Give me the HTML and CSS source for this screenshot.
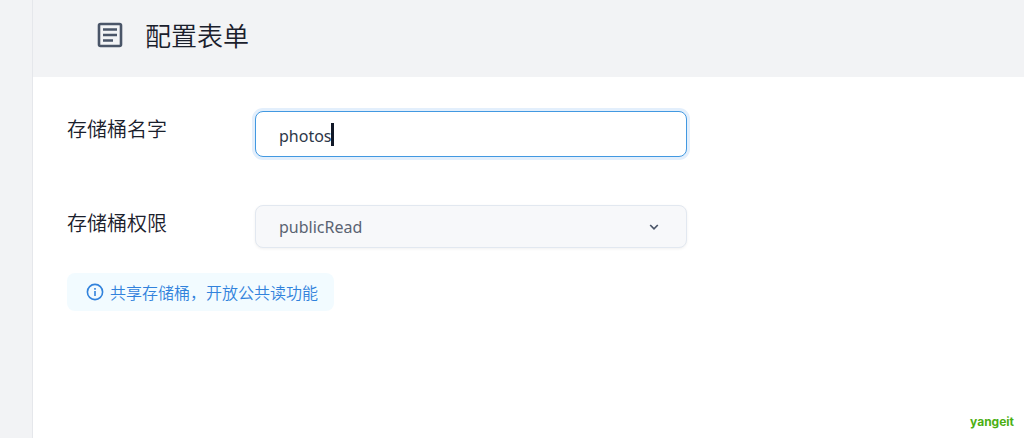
FILE: index.html
```html
<!DOCTYPE html>
<html lang="zh-CN">
<head>
<meta charset="utf-8">
<meta name="viewport" content="width=device-width, initial-scale=1">
<title>配置表单</title>
<link rel="stylesheet" href="styles.css">
</head>
<body>
<div class="layout">
  <aside class="rail"></aside>
  <main class="panel">
    <header class="panel-header">
      <svg class="header-icon" viewBox="0 0 26 26" fill="none" stroke="currentColor" aria-hidden="true">
        <rect x="2" y="2" width="22" height="22" rx="1.5" stroke-width="2.6"/>
        <path d="M6 7.5h14M6 13h14M6 18.5h10" stroke-width="2.4"/>
      </svg>
      <h1 class="title">配置表单</h1>
    </header>
    <form class="form">
      <div class="row">
        <label class="label" for="name">存储桶名字</label>
        <div class="field">
          <input class="control input" id="name" type="text" value="photos">
          <span class="caret"></span>
        </div>
      </div>
      <div class="row">
        <label class="label" for="access">存储桶权限</label>
        <div class="field">
          <select class="control select" id="access">
            <option>publicRead</option>
          </select>
          <svg class="chevron" viewBox="0 0 10 8" fill="none" stroke="currentColor" aria-hidden="true">
            <path d="M1.2 2 5 5.8 8.8 2" stroke-width="1.7"/>
          </svg>
        </div>
      </div>
      <p class="hint">
        <svg class="hint-icon" viewBox="0 0 18 18" fill="none" stroke="currentColor" aria-hidden="true">
          <circle cx="9" cy="9" r="7.6" stroke-width="1.6"/>
          <path d="M9 8v5M9 5v1.7" stroke-width="1.6"/>
        </svg>
        <span>共享存储桶，开放公共读功能</span>
      </p>
    </form>
    <footer class="brand">yangeit</footer>
  </main>
</div>
</body>
</html>
```
FILE: styles.css
```css
* {
  box-sizing: border-box;
}

body {
  margin: 0;
  background: #fff;
  color: #1a202c;
  font-family: "Noto Sans", "Noto Sans CJK SC", sans-serif;
  font-size: 16px;
}

.layout {
  display: flex;
  min-height: 100vh;
}

.rail {
  flex: 0 0 33px;
  background: #f2f3f5;
  border-right: 1px solid #e5e7eb;
}

.panel {
  flex: 1;
  display: flex;
  flex-direction: column;
}

.panel-header {
  display: flex;
  align-items: center;
  gap: 22px;
  padding: 15px 64px 22px;
  background: #f2f3f5;
}

.header-icon {
  width: 26px;
  height: 26px;
  color: #4a5568;
}

.title {
  margin: 0;
  font-family: "Noto Sans CJK SC", sans-serif;
  font-size: 26px;
  line-height: 40px;
  font-weight: 350;
}

.form {
  flex: 1;
  padding: 34px;
}

.row {
  display: flex;
  align-items: flex-start;
  margin-bottom: 48px;
}

.row + .row {
  margin-bottom: 25px;
}

.label {
  flex: 0 0 188px;
  font-family: "Noto Sans CJK SC", sans-serif;
  font-size: 20px;
  font-weight: 350;
  line-height: 35px;
}

.field {
  position: relative;
  flex: 0 1 432px;
}

.control {
  display: block;
  width: 100%;
  padding: 0 23px;
  border: 1px solid #e2e8f0;
  border-radius: 8px;
  font: inherit;
  outline: none;
}

.input {
  height: 46px;
  padding-top: 3px;
  border-color: #4299e1;
  background: #fff;
  box-shadow: 0 0 0 3px #e3effc;
  color: #2d3748;
}

.select {
  height: 43px;
  appearance: none;
  background: #f7f8fa;
  box-shadow: 0 1px 3px #0000000f;
  color: #5a6372;
}

.caret {
  position: absolute;
  left: 76px;
  top: 12px;
  width: 3px;
  height: 23px;
  background: #111827;
}

.chevron {
  position: absolute;
  right: 28px;
  top: 18px;
  width: 10px;
  height: 8px;
  color: #4a5568;
  pointer-events: none;
}

.hint {
  display: inline-flex;
  align-items: center;
  gap: 6px;
  margin: 0;
  padding: 7px 16px 7px 19px;
  border-radius: 8px;
  background: #f2fbff;
  color: #3182dc;
  font-family: "Noto Sans CJK SC", sans-serif;
  font-weight: 350;
  line-height: 24px;
}

.hint-icon {
  width: 18px;
  height: 18px;
}

.brand {
  padding: 0 10px 8px;
  color: #4caf14;
  font-family: Inter, sans-serif;
  font-size: 12px;
  font-weight: 700;
  line-height: 16px;
  text-align: right;
}
```
